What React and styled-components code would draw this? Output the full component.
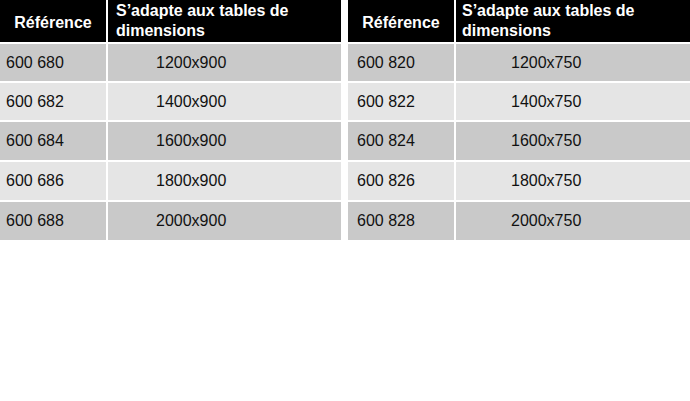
import { Fragment } from 'react';
import styled, { createGlobalStyle } from 'styled-components';

const GlobalStyle = createGlobalStyle`
  html, body {
    margin: 0;
    padding: 0;
    background: #ffffff;
  }
  body {
    font-family: 'Liberation Sans', Arial, sans-serif;
  }
`;

const Page = styled.div`
  display: flex;
  gap: 7px;
  width: 690px;
`;

const Table = styled.div`
  display: grid;
  grid-template-columns: 106px ${(p) => p.$second}px;
  grid-template-rows: 42px 37px 37px 38px 38px 38px;
  gap: 2px;
`;

const HeadCell = styled.div`
  background: #000000;
  color: #ffffff;
  font-weight: bold;
  font-size: 16px;
  line-height: 20px;
  display: flex;
  align-items: center;
  justify-content: ${(p) => (p.$center ? 'center' : 'flex-start')};
  padding: ${(p) => (p.$center ? '4px 0 0 0' : `0 4px 0 ${p.$pad}px`)};
`;

const Cell = styled.div`
  background: ${(p) => (p.$dark ? '#c9c9c9' : '#e5e5e5')};
  color: #111111;
  font-size: 16px;
  line-height: 20px;
  display: flex;
  align-items: center;
  padding-left: ${(p) => p.$pad}px;
`;

const tables = [
  {
    second: 233,
    refPad: 6,
    headPad: 8,
    dimPad: 48,
    rows: [
      ['600 680', '1200x900'],
      ['600 682', '1400x900'],
      ['600 684', '1600x900'],
      ['600 686', '1800x900'],
      ['600 688', '2000x900'],
    ],
  },
  {
    second: 234,
    refPad: 9,
    headPad: 6,
    dimPad: 55,
    rows: [
      ['600 820', '1200x750'],
      ['600 822', '1400x750'],
      ['600 824', '1600x750'],
      ['600 826', '1800x750'],
      ['600 828', '2000x750'],
    ],
  },
];

export default function App() {
  return (
    <>
      <GlobalStyle />
      <Page>
        {tables.map((t, i) => (
          <Table key={i} $second={t.second}>
            <HeadCell $center>Référence</HeadCell>
            <HeadCell $pad={t.headPad}>S’adapte aux tables de dimensions</HeadCell>
            {t.rows.map(([ref, dim], r) => (
              <Fragment key={ref}>
                <Cell $dark={r % 2 === 0} $pad={t.refPad}>{ref}</Cell>
                <Cell $dark={r % 2 === 0} $pad={t.dimPad}>{dim}</Cell>
              </Fragment>
            ))}
          </Table>
        ))}
      </Page>
    </>
  );
}
